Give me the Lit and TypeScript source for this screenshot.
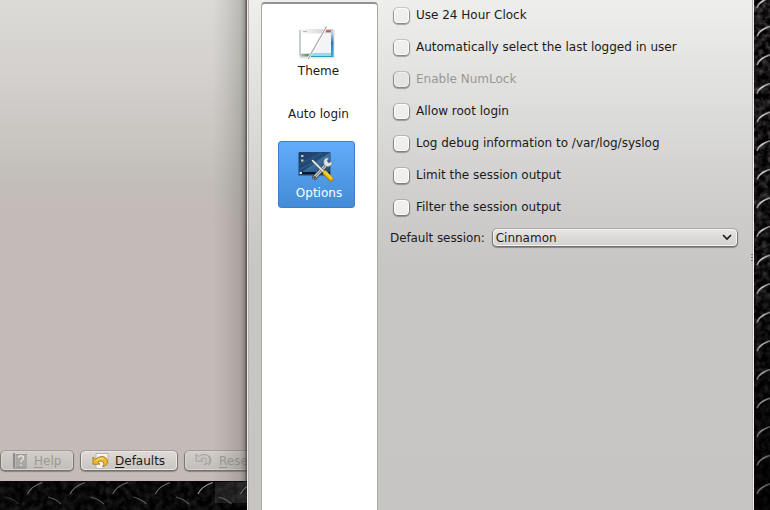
import { LitElement, html, css, svg } from "lit";
import { customElement, property } from "lit/decorators.js";

const range = (n: number) => Array.from({ length: n }, (_, i) => i);

/** Diamond-plate wallpaper behind the windows. */
@customElement("tread-wallpaper")
class TreadWallpaper extends LitElement {
  static styles = css`
    :host { display: block; width: 770px; height: 510px; }
    svg { display: block; }
  `;
  render() {
    return html`<svg width="770" height="510" viewBox="0 0 770 510">
      <defs>
        <filter id="grain" x="0" y="0" width="100%" height="100%" color-interpolation-filters="sRGB">
          <feTurbulence type="fractalNoise" baseFrequency="0.16" numOctaves="4" seed="8"></feTurbulence>
          <feColorMatrix values="0.6 0 0 0 -0.2  0.6 0 0 0 -0.208  0.6 0 0 0 -0.208  0 0 0 0 1"></feColorMatrix>
        </filter>
        <linearGradient id="fade" x1="0" y1="0" x2="0" y2="1">
          <stop offset="0" stop-color="#000" stop-opacity="0"></stop>
          <stop offset=".5" stop-color="#000" stop-opacity=".3"></stop>
          <stop offset="1" stop-color="#000" stop-opacity=".85"></stop>
        </linearGradient>
        <linearGradient id="steel" x1="0" y1="1" x2="1" y2="0">
          <stop offset="0" stop-color="#888"></stop>
          <stop offset=".5" stop-color="#ddd"></stop>
          <stop offset="1" stop-color="#888"></stop>
        </linearGradient>
      </defs>
      <rect width="770" height="510" fill="#030303"></rect>
      <rect x="754" width="16" height="510" filter="url(#grain)"></rect>
      <rect y="481" width="248" height="29" filter="url(#grain)" opacity=".35"></rect>
      <rect x="754" width="16" height="510" fill="url(#fade)"></rect>
      ${range(18).map((i) => {
        const y = 8 + i * 28.6;
        const o = i < 10 ? 0.95 : 0.95 - (i - 9) * 0.055;
        return svg`<path d="M757 ${y}q1-4 5-6.500q4-3 9-4" fill="none" stroke="url(#steel)" stroke-width="1.600" opacity=${o}></path>`;
      })}
      <rect x="215" y="482" width="32" height="21" fill="#999" opacity=".17"></rect>
      ${range(6).map((i) => {
        const x = 27.500 + i * 42.600;
        return svg`
          <path d="M${x} 494q4-8 15-11.500" fill="none" stroke="#aaa" stroke-width="1.200" opacity=${i === 4 ? 0.9 : 0.6}></path>
          <path d="M${x - 22} 497q8 2 13 7" fill="none" stroke="#999" stroke-width="1.200" opacity=${i === 0 ? 0.3 : 0.5}></path>`;
      })}
    </svg>`;
  }
}

@customElement("check-row")
class CheckRow extends LitElement {
  @property() label = "";
  @property({ type: Boolean, reflect: true }) disabled = false;
  static styles = css`
    :host { display: flex; align-items: center; height: 32px; color: #1c1a19; }
    .box {
      box-sizing: border-box; width: 15px; height: 15px; margin: 1px 7px 0 4px; border-radius: 4px;
      border: 1px solid #fbfbfa; background: linear-gradient(#f0f0ef, #eeedec);
      box-shadow: 0 0 0 1px rgba(0, 0, 0, .13), 0 1px 1px 1px rgba(0, 0, 0, .3);
    }
    :host([disabled]) { color: #999795; }
    :host([disabled]) .box { background: #e5e4e3; border-color: #eeeeed; }
  `;
  render() {
    return html`<span class="box"></span><span>${this.label}</span>`;
  }
}

const themeIcon = svg`
  <svg width="38" height="36" viewBox="0 0 38 36">
    <defs>
      <linearGradient id="tb" x1="0" x2="1"><stop offset="0" stop-color="#fafafa"/><stop offset="1" stop-color="#c9c9cb"/></linearGradient>
      <linearGradient id="tr" x1="0" y1="0" x2="0" y2="1"><stop offset="0" stop-color="#d6dce2"/><stop offset=".45" stop-color="#3477ae"/><stop offset="1" stop-color="#3cacd9"/></linearGradient>
      <linearGradient id="tg" x1="0" x2="1"><stop offset="0" stop-color="#b8c9b5"/><stop offset="1" stop-color="#287335"/></linearGradient>
    </defs>
    <rect x="1.500" y="4.500" width="35" height="29" rx="1" fill="#d8dddd" opacity=".8"/>
    <rect x="2" y="4" width="33" height="5" fill="url(#tb)"/>
    <path d="M2 5v25" stroke="#b9c8be" stroke-width="1.500"/>
    <rect x="33" y="6" width="2.500" height="26" fill="url(#tr)"/>
    <rect x="2" y="29" width="12" height="2.500" fill="url(#tg)"/>
    <rect x="13" y="28" width="20" height="3.500" fill="#9cd7ec"/>
    <path d="M12 31.500h23" stroke="#3598bd"/>
    <rect x="3" y="8.500" width="30" height="19.500" fill="#fff"/>
    <path d="M27 8.500h6v19.500H15z" fill="#f3f4f6"/>
    <path d="M5 6.500h4" stroke="#b6b6b8"/>
    <path d="M28 6.200h5" stroke="#c95854" stroke-width="2"/>
    <path d="M28.500 1.500L10 34" stroke="#fff" stroke-width="2.500"/>
    <path d="M28.500 1.500L10 34" stroke="#a5a5a5" stroke-width="1.200"/>
  </svg>`;

const optionsIcon = svg`
  <svg width="38" height="34" viewBox="0 0 38 34">
    <defs>
      <linearGradient id="scr" x1="0" y1="0" x2="1" y2="1"><stop offset="0" stop-color="#213e67"/><stop offset=".5" stop-color="#224c7b"/><stop offset=".52" stop-color="#3b709e"/><stop offset="1" stop-color="#17426f"/></linearGradient>
    </defs>
    <rect x="1" y="3" width="33" height="24" rx="1" fill="#1b4678" opacity=".5"/>
    <rect x="2" y="3" width="31" height="22" fill="url(#scr)"/>
    <path d="M3 20L32 6M3 15L25 4" stroke="#669bc2" stroke-width=".5" opacity=".5"/>
    <rect x="2" y="23" width="31" height="2.500" fill="#081323"/>
    <path d="M2.500 24h2.500" stroke="#d4e5f4" stroke-width="2"/>
    <path d="M4 7h2.500" stroke="#b3c9d4" stroke-width="2"/>
    <path d="M4 11.500h2.500" stroke="#bfd1a5" stroke-width="2"/>
    <path d="M17.500 28.500L29 16" stroke="#414b52" stroke-width="5" stroke-linecap="round"/>
    <path d="M17.500 28.500L29 16" stroke="#c7cccd" stroke-width="3.200" stroke-linecap="round"/>
    <path d="M18 28L29 16" stroke="#687277" stroke-width="1"/>
    <path d="M27 11q-1 4 1 6 3 2 7-1v-4l-3 2-2-2 2-3q-4-1-5 2z" fill="#dfe4e6" stroke="#6b7982" stroke-width=".7"/>
    <circle cx="17.500" cy="28.500" r="1.300" fill="#38434b"/>
    <path d="M16 12L28 24" stroke="#5e6a74" stroke-width="2.600"/>
    <path d="M15.500 11.500L28 24" stroke="#f4f5f5" stroke-width="1.600" stroke-linecap="round"/>
    <path d="M28 24L34 30" stroke="#a87a0a" stroke-width="5" stroke-linecap="round"/>
    <path d="M28 23.500L34 29.500" stroke="#f1c11c" stroke-width="3.600" stroke-linecap="round"/>
    <path d="M28.500 23L34 28.500" stroke="#ffe56c" stroke-width="1"/>
  </svg>`;

const helpIcon = svg`
  <svg width="16" height="18" viewBox="0 0 16 18">
    <rect x="1" y="1" width="13.500" height="15.500" rx="1" fill="#8e8b88"/>
    <rect x="4" y="2.500" width="10" height="13" fill="#a9a6a3"/>
    <path d="M3 1.500h11" stroke="#d7d4d0"/>
    <path d="M3.500 2v14" stroke="#c4c1bd" stroke-width=".8"/>
    <path d="M6.500 6q0-2.200 2.500-2.200t2.500 2.100q0 1.400-1.500 2.300-1 .7-1 2.100M9 12.200v1.600" fill="none" stroke="#e6e4e1" stroke-width="1.400"/>
  </svg>`;

const defaultsIcon = svg`
  <svg width="18" height="18" viewBox="0 0 18 18">
    <path d="M4 1.500h12v11l-4 4H4z" fill="#f4f3f2" stroke="#aaa7a4" stroke-width=".8"/>
    <path d="M12 16.500v-3.500h4" fill="#ddd" stroke="#b0adaa" stroke-width=".7"/>
    <path d="M1 5v7.200h7L5.800 10q3.600-2.200 5.500 0 1.500 2-.8 4.800 4.800-1.300 5-5Q15 4.800 10 4.500 6.300 4.500 3.400 7.300z" fill="#efb92c" stroke="#9d6c13" stroke-width=".8"/>
    <path d="M4.500 8.500Q8 5.500 11.500 6.500" fill="none" stroke="#ffe684" stroke-width="1"/>
  </svg>`;

const resetIcon = svg`
  <svg width="18" height="18" viewBox="0 0 18 18">
    <path d="M1 2v7.200h7L5.800 7q3.200-2.200 5.200 0 1.700 2.300-2 5.700 5.500-1 5.700-5Q14.600 3.500 10 2.500 6.300 2 3.400 4.500z" fill="#c8c4c0" stroke="#9b9895" stroke-width=".8"/>
    <path d="M13.500 3.500q5 4.500 0 9.500" fill="none" stroke="#a19e9b" stroke-width="1.100"/>
  </svg>`;

@customElement("app-root")
class AppRoot extends LitElement {
  static styles = css`
    :host {
      display: block; position: relative; width: 770px; height: 510px; overflow: hidden;
      font: 12px/16px "DejaVu Sans", sans-serif; color: #1c1a19; white-space: nowrap;
    }
    * { box-sizing: border-box; }
    svg { display: block; }
    .back {
      position: absolute; left: 0; top: 0; width: 247px; height: 481px; overflow: hidden;
      display: flex; flex-direction: column; justify-content: flex-end; padding-bottom: 11px;
      background: linear-gradient(#dcdad7 0, #d3d0cd 75px, #c9c5c1 140px, #c2bdb8 185px, #c4bab8 222px, #c4bab8 100%);
    }
    .shade {
      position: absolute; left: 212px; top: 0; width: 35px; height: 481px;
      background: linear-gradient(90deg, rgba(120, 120, 105, 0), rgba(110, 110, 98, .12) 40%, rgba(90, 90, 80, .25) 80%, rgba(70, 70, 66, .4) 92%, rgba(50, 48, 46, .8));
    }
    .buttons { display: flex; gap: 7px; padding-left: 1px; }
    .button {
      flex: none; display: flex; align-items: center; height: 19px; border-radius: 4px;
      border: 1px solid #e9e7e4; background: linear-gradient(#dddad6, #c9c5c0);
      box-shadow: 0 0 0 1px rgba(0, 0, 0, .13), 0 1px 1px 1px rgba(0, 0, 0, .3);
      gap: 6px; padding: 1px 0 0 10px; width: 72px;
    }
    .button.wide { width: 96px; gap: 5px; }
    .button.wide, .button.wide ~ .button { margin-left: 1px; }
    .button.wide ~ .button { padding-left: 9px; }
    .button.off { color: #9c9893; border-color: #d7d3cf; background: linear-gradient(#d1cdc9, #c3beba); }
    u { text-underline-offset: 2px; text-decoration-thickness: 1px; }
    .dialog {
      position: absolute; left: 247px; top: 0; width: 507px; height: 510px; display: flex;
      padding: 2px 0 0 14px;
      border-left: 1px solid #eeeceb; border-right: 1px solid #f2efee;
      background: linear-gradient(#eeeeed 0, #dededd 100px, #d2d1d0 180px, #c7c6c5 265px, #c6c5c4 100%);
    }
    .dialog::before { content: ""; position: absolute; left: 0; top: 0; width: 1px; height: 100%; background: #b9b0ae; }
    .dialog::after { content: ""; position: absolute; right: 0; top: 0; width: 1px; height: 100%; background: #b9b4b1; }
    .list {
      margin-left: -1px; width: 117px; height: 520px; border-radius: 4px; background: #fff;
      border: 1px solid #aaa9a8; border-top: 2px solid #939291;
      display: flex; flex-direction: column; align-items: center; padding-right: 8px;
    }
    .item { display: flex; flex-direction: column; align-items: center; }
    .theme { margin-top: 21px; padding-left: 3px; }
    .theme .name { margin: 2px 0 0 3px; }
    .auto { margin: 27px 0 19px 6px; }
    .picked {
      width: 77px; height: 67px; padding-top: 7px; border-radius: 3px; margin-left: 1px;
      border: 1px solid #3a7fc9; background: linear-gradient(#62acfb, #438bd6); color: #fff;
    }
    .picked .name { margin: 2px 0 0 6px; }
    .form { padding: 0 0 0 12px; margin-top: -3px; width: 361px; }
    .session { display: flex; align-items: center; height: 29px; gap: 8px; }
    .session > span { letter-spacing: -.09px; }
    .combo {
      flex: none; display: flex; align-items: center; justify-content: space-between; width: 244px; height: 17px;
      border: 1px solid #f4f3f2; border-radius: 4px; padding: 0 4px 0 2px;
      background: linear-gradient(#e5e4e3, #d3d2d0);
      box-shadow: 0 0 0 1px rgba(0, 0, 0, .13), 0 1px 1px 1px rgba(0, 0, 0, .34);
    }
    .grip {
      position: absolute; right: 0; top: 254px; width: 2px; height: 8px; z-index: 1;
      background: repeating-linear-gradient(#777 0 1px, transparent 1px 3px);
    }
  `;

  private checks = [
    { label: "Use 24 Hour Clock" },
    { label: "Automatically select the last logged in user" },
    { label: "Enable NumLock", off: true },
    { label: "Allow root login" },
    { label: "Log debug information to /var/log/syslog" },
    { label: "Limit the session output" },
    { label: "Filter the session output" },
  ];

  render() {
    return html`
      <tread-wallpaper></tread-wallpaper>
      <section class="back">
        <div class="buttons">
          <div class="button off">${helpIcon}<span><u>H</u>elp</span></div>
          <div class="button wide">${defaultsIcon}<span><u>D</u>efaults</span></div>
          <div class="button off">${resetIcon}<span><u>R</u>eset</span></div>
        </div>
        <div class="shade"></div>
      </section>
      <section class="dialog">
        <nav class="list">
          <div class="item theme">${themeIcon}<span class="name">Theme</span></div>
          <div class="item auto">Auto login</div>
          <div class="item picked">${optionsIcon}<span class="name">Options</span></div>
        </nav>
        <div class="form">
          ${this.checks.map((c) => html`<check-row .label=${c.label} ?disabled=${!!c.off}></check-row>`)}
          <div class="session">
            <span>Default session:</span>
            <div class="combo"><span>Cinnamon</span>
              <svg width="10" height="7" viewBox="0 0 10 7"><path d="M1 1l4 4 4-4" fill="none" stroke="#1c1a19" stroke-width="1.700"></path></svg>
            </div>
          </div>
        </div>
        <div class="grip"></div>
      </section>`;
  }
}
